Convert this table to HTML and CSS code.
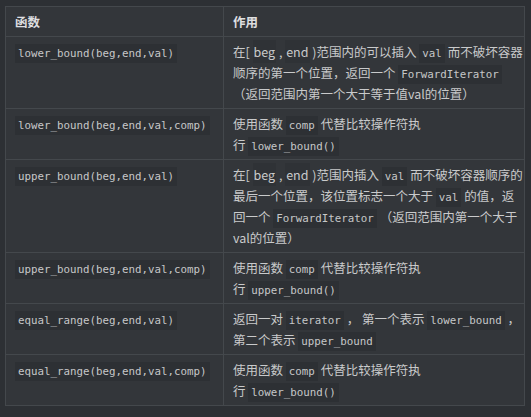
FILE: index.html
```html
<!DOCTYPE html>
<html lang="zh">
<head>
<meta charset="utf-8">
<link rel="stylesheet" href="styles.css">
</head>
<body>
<table class="tbl">
  <colgroup><col class="c1"><col class="c2"></colgroup>
  <thead>
    <tr><th>函数</th><th>作用</th></tr>
  </thead>
  <tbody>
    <tr>
      <td><code>lower_bound(beg,end,val)</code></td>
      <td>在[ <span class="hl">beg</span> , <span class="hl">end</span> )范围内的可以插入 <code>val</code> 而不破坏容器<br>顺序的第一个位置，返回一个 <code>ForwardIterator</code><br>（返回范围内第一个大于等于值val的位置）</td>
    </tr>
    <tr>
      <td><code>lower_bound(beg,end,val,comp)</code></td>
      <td>使用函数 <code>comp</code> 代替比较操作符执<br>行 <code>lower_bound()</code></td>
    </tr>
    <tr>
      <td><code>upper_bound(beg,end,val)</code></td>
      <td>在[ <span class="hl">beg</span> , <span class="hl">end</span> )范围内插入 <code>val</code> 而不破坏容器顺序的<br>最后一个位置，该位置标志一个大于 <code>val</code> 的值，返<br>回一个 <code>ForwardIterator</code> （返回范围内第一个大于<br>val的位置）</td>
    </tr>
    <tr>
      <td><code>upper_bound(beg,end,val,comp)</code></td>
      <td>使用函数 <code>comp</code> 代替比较操作符执<br>行 <code>upper_bound()</code></td>
    </tr>
    <tr>
      <td><code>equal_range(beg,end,val)</code></td>
      <td>返回一对 <code>iterator</code> ， 第一个表示 <code>lower_bound</code> ，<br>第二个表示 <code>upper_bound</code></td>
    </tr>
    <tr>
      <td><code>equal_range(beg,end,val,comp)</code></td>
      <td>使用函数 <code>comp</code> 代替比较操作符执<br>行 <code>lower_bound()</code></td>
    </tr>
  </tbody>
</table>
</body>
</html>
```
FILE: styles.css
```css
html, body {
  margin: 0;
  padding: 0;
  background: #2d3034;
}
body {
  padding: 6px 7px 0 5px;
  font-family: "Noto Sans CJK SC", "Noto Sans", sans-serif;
  font-size: 12.5px;
  color: #c9cacb;
}
.tbl {
  border-collapse: collapse;
  width: 519px;
  table-layout: fixed;
  background: #33363a;
}
.c1 { width: 218px; }
.c2 { width: 301px; }
.tbl th, .tbl td {
  border: 1px solid #44484c;
  padding: 4px 6px 4px 9px;
  line-height: 21px;
  text-align: left;
  vertical-align: top;
  white-space: nowrap;
}
.tbl th {
  font-weight: bold;
  color: #dedfe0;
}
code {
  font-family: "DejaVu Sans Mono", "Liberation Mono", monospace;
  font-size: 10.8px;
  line-height: 1;
  background: #2d3034;
  padding: 3px 3px;
  color: #c6c7c8;
}
.hl {
  background: #2f3236;
  line-height: 1;
  padding: 2px 1px;
}
```
